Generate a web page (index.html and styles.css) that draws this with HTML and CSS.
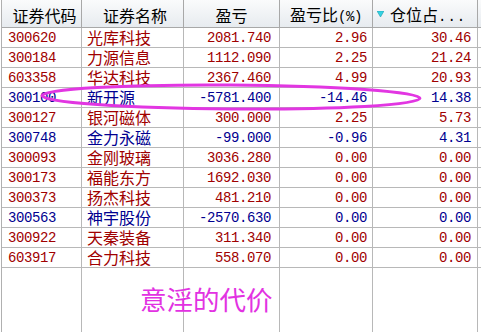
FILE: index.html
```html
<!DOCTYPE html>
<html>
<head>
<meta charset="utf-8">
<link rel="stylesheet" href="styles.css">
</head>
<body>
<div class="grid">
  <div class="row head">
    <div class="c c1">证券代码</div>
    <div class="c c2">证券名称</div>
    <div class="c c3">盈亏</div>
    <div class="c c4"><span>盈亏比<span class="h">(%)</span></span></div>
    <div class="c c5"><svg class="tri" width="7" height="6" viewBox="0 0 7 6"><polygon points="0,0 7,0 3.5,6" fill="#33d3e3" stroke="#1f9fb0" stroke-width="0.6"/></svg><span>仓位占<span class="h dots">...</span></span></div>
    <div class="c c6"></div>
  </div>
  <div class="row up"><div class="c c1 n">300620</div><div class="c c2">光库科技</div><div class="c c3 n">2081.740</div><div class="c c4 n">2.96</div><div class="c c5 n">30.46</div><div class="c c6"></div></div>
  <div class="row up"><div class="c c1 n">300184</div><div class="c c2">力源信息</div><div class="c c3 n">1112.090</div><div class="c c4 n">2.25</div><div class="c c5 n">21.24</div><div class="c c6"></div></div>
  <div class="row up"><div class="c c1 n">603358</div><div class="c c2">华达科技</div><div class="c c3 n">2367.460</div><div class="c c4 n">4.99</div><div class="c c5 n">20.93</div><div class="c c6"></div></div>
  <div class="row down"><div class="c c1 n">300100</div><div class="c c2">新开源</div><div class="c c3 n">-5781.400</div><div class="c c4 n">-14.46</div><div class="c c5 n">14.38</div><div class="c c6"></div></div>
  <div class="row up"><div class="c c1 n">300127</div><div class="c c2">银河磁体</div><div class="c c3 n">300.000</div><div class="c c4 n">2.25</div><div class="c c5 n">5.73</div><div class="c c6"></div></div>
  <div class="row down"><div class="c c1 n">300748</div><div class="c c2">金力永磁</div><div class="c c3 n">-99.000</div><div class="c c4 n">-0.96</div><div class="c c5 n">4.31</div><div class="c c6"></div></div>
  <div class="row up"><div class="c c1 n">300093</div><div class="c c2">金刚玻璃</div><div class="c c3 n">3036.280</div><div class="c c4 n">0.00</div><div class="c c5 n">0.00</div><div class="c c6"></div></div>
  <div class="row up"><div class="c c1 n">300173</div><div class="c c2">福能东方</div><div class="c c3 n">1692.030</div><div class="c c4 n">0.00</div><div class="c c5 n">0.00</div><div class="c c6"></div></div>
  <div class="row up"><div class="c c1 n">300373</div><div class="c c2">扬杰科技</div><div class="c c3 n">481.210</div><div class="c c4 n">0.00</div><div class="c c5 n">0.00</div><div class="c c6"></div></div>
  <div class="row down"><div class="c c1 n">300563</div><div class="c c2">神宇股份</div><div class="c c3 n">-2570.630</div><div class="c c4 n">0.00</div><div class="c c5 n">0.00</div><div class="c c6"></div></div>
  <div class="row up"><div class="c c1 n">300922</div><div class="c c2">天秦装备</div><div class="c c3 n">311.340</div><div class="c c4 n">0.00</div><div class="c c5 n">0.00</div><div class="c c6"></div></div>
  <div class="row up"><div class="c c1 n">603917</div><div class="c c2">合力科技</div><div class="c c3 n">558.070</div><div class="c c4 n">0.00</div><div class="c c5 n">0.00</div><div class="c c6"></div></div>
  <div class="row fill"><div class="c c1"></div><div class="c c2"></div><div class="c c3"></div><div class="c c4"></div><div class="c c5"></div><div class="c c6"></div></div>
</div>
<svg class="ring" width="481" height="332" viewBox="0 0 481 332"><ellipse cx="231" cy="97" rx="189" ry="12" fill="none" stroke="#e236e2" stroke-width="3" transform="rotate(0.4 231 97)"/></svg>
<div class="note">意淫的代价</div>
</body>
</html>
```
FILE: styles.css
```css
html, body {
  margin: 0;
  padding: 0;
  background: #ffffff;
}
body {
  width: 481px;
  height: 332px;
  position: relative;
  overflow: hidden;
  font-family: "Noto Sans CJK SC", sans-serif;
  font-size: 16px;
}
.grid {
  display: flex;
  flex-direction: column;
  height: 332px;
  margin-left: 1px;
  border-left: 1px solid #b0b0b0;
}
.row {
  display: grid;
  grid-template-columns: 80px 102px 96px 93px 105px 1fr;
  height: 20px;
  border-bottom: 1px solid #b8b8b8;
  box-sizing: border-box;
}
.c {
  border-right: 1px solid #b8b8b8;
  box-sizing: border-box;
  display: flex;
  align-items: center;
  white-space: nowrap;
  line-height: 16px;
}
.c6 { border-right: none; }
.head {
  height: 28px;
  background: linear-gradient(#fafbfc, #e7ebef);
  border-bottom: 1px solid #a8a8a8;
  color: #000;
}
.head .c {
  justify-content: center;
  padding-top: 3px;
  border-right-color: #a8a8a8;
}
.head .c5 {
  justify-content: flex-start;
  padding-left: 4px;
}
.tri {
  margin-right: 6px;
  margin-top: -2px;
}
.h {
  font-family: "Liberation Mono", monospace;
  font-size: 14px;
  letter-spacing: -0.4px;
}
.dots { letter-spacing: 1px; }
.up { color: #a00000; }
.down { color: #000090; }
.n {
  font-family: "Liberation Mono", monospace;
  font-size: 14px;
  letter-spacing: -0.4px;
}
.c1 { padding-left: 6px; }
.c2 { padding-left: 5px; }
.row .c2 { padding-bottom: 1px; }
.head .c2 { padding-bottom: 0; }
.row .c3.n { justify-content: flex-end; padding-right: 8px; }
.row .c4.n { justify-content: flex-end; padding-right: 5px; }
.row .c5.n { justify-content: flex-end; padding-right: 6px; }
.fill {
  flex: 1;
  border-bottom: none;
}
.ring {
  position: absolute;
  left: 0;
  top: 0;
  pointer-events: none;
}
.note {
  position: absolute;
  left: 140px;
  top: 286px;
  font-family: "Noto Sans CJK SC", sans-serif;
  font-size: 26.5px;
  line-height: 26.5px;
  color: #e232e2;
}
```
